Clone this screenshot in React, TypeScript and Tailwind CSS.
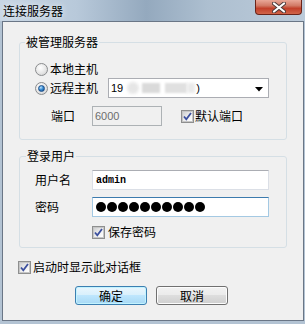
import React from "react";

const cjk = "font-['Noto_Sans_CJK_SC','Noto_Sans',sans-serif] text-[12px] leading-[14px] text-black";

function Radio({ checked }: { checked?: boolean }) {
  return (
    <span className="w-[13px] h-[13px] rounded-full border border-[#8a8c8e] bg-[radial-gradient(circle_at_40%_35%,#ffffff_0%,#e6e6e6_55%,#c9c9c9_100%)] flex items-center justify-center shrink-0">
      {checked && (
        <span className="w-[7px] h-[7px] rounded-full bg-[radial-gradient(circle_at_35%_30%,#bfe3fb_0%,#3b8fd6_45%,#0e3f7e_100%)] border border-[#1c4f8a]" />
      )}
    </span>
  );
}

function Check() {
  return (
    <span className="w-[13px] h-[13px] border border-[#8e8f8f] bg-white flex items-center justify-center shrink-0">
      <span className="w-[11px] h-[11px] border border-[#c6c6c6] bg-[linear-gradient(135deg,#cfd0d1_0%,#f2f2f2_60%,#ffffff_100%)] flex items-center justify-center">
        <svg width="9" height="9" viewBox="0 0 9 9">
          <path d="M1 4.5 L3.3 7.3 L8 1" fill="none" stroke="#3b4f9e" strokeWidth="1.8" />
        </svg>
      </span>
    </span>
  );
}

export default function App() {
  return (
    <div className="w-[305px] h-[324px] bg-[#b3c3d3] flex flex-col overflow-hidden">
      {/* title bar */}
      <div className="h-[21px] shrink-0 flex justify-between bg-[linear-gradient(90deg,#c8d6e4_0%,#b8c9da_25%,#94a9be_48%,#adbfd0_68%,#bccbda_100%)]">
        <span className={`${cjk} pl-[3px] pt-[4px] [text-shadow:0_0_6px_rgba(255,255,255,0.95)]`}>连接服务器</span>
        <div className="w-[47px] h-[15px] mr-[3px] rounded-b-[4px] border border-t-0 border-[#6b2419] bg-[linear-gradient(180deg,#e9a898_0%,#d27a66_40%,#c2402a_60%,#d1654a_100%)] flex items-center justify-center">
          <svg width="14" height="11" viewBox="0 0 14 11">
            <path d="M2 1.5 L12 9.5 M12 1.5 L2 9.5" stroke="#4a3a3a" strokeWidth="4" strokeLinecap="round" />
            <path d="M2 1.5 L12 9.5 M12 1.5 L2 9.5" stroke="#ffffff" strokeWidth="2.2" strokeLinecap="round" />
          </svg>
        </div>
      </div>

      {/* client area */}
      <div className="flex-1 pl-[2px] pr-[1px] pb-[3px] flex">
        <div className="flex-1 border border-[#6a7686] bg-[#f0f0f0] flex flex-col">
          {/* group 1 */}
          <div className="relative mt-[20px] ml-[16px] w-[268px] h-[98px] border border-[#d5dfe5] rounded-[3px] flex flex-col pt-[19px]">
            <span className={`${cjk} absolute -top-[8px] left-[5px] px-[1px] bg-[#f0f0f0]`}>被管理服务器</span>
            <div className="h-[14px] pl-[15px] flex items-center">
              <Radio />
              <span className={`${cjk} ml-[2px]`}>本地主机</span>
            </div>
            <div className="mt-[2px] h-[20px] pl-[15px] flex items-center">
              <Radio checked />
              <span className={`${cjk} ml-[2px] w-[58px]`}>远程主机</span>
              <div className="w-[161px] h-[20px] bg-white border border-[#abadb3] flex items-center pl-[2px] relative">
                <span className="font-['Liberation_Sans',sans-serif] text-[11px] text-black">19</span>
                <span className="ml-[4px] w-[12px] h-[12px] bg-[#e6e6e6] blur-[1.5px] rounded-full" />
                <span className="ml-[3px] w-[18px] h-[10px] bg-[#dadada] blur-[1px]" />
                <span className="ml-[5px] w-[22px] h-[10px] bg-[#e0e0e0] blur-[1px]" />
                <span className="w-[8px] h-[10px] bg-[#eaeaea] blur-[1.5px]" />
                <span className="ml-[1px] font-['Liberation_Sans',sans-serif] text-[11px] text-black">)</span>
                <svg className="absolute right-[5px] top-[8px]" width="8" height="5" viewBox="0 0 8 5">
                  <path d="M0 0 H8 L4 4.5 Z" fill="#000" />
                </svg>
              </div>
            </div>
            <div className="mt-[8px] h-[20px] pl-[31px] flex items-center">
              <span className={`${cjk} w-[41px]`}>端口</span>
              <div className="w-[70px] h-[20px] border border-[#adb2b5] bg-[#f0f0f0] flex items-center pl-[2px]">
                <span className="font-['Liberation_Sans',sans-serif] text-[11px] text-[#6d6d6d]">6000</span>
              </div>
              <div className="ml-[19px] flex items-center">
                <Check />
                <span className={`${cjk} ml-[1px]`}>默认端口</span>
              </div>
            </div>
          </div>

          {/* group 2 */}
          <div className="relative mt-[16px] ml-[16px] w-[268px] h-[92px] border border-[#d5dfe5] rounded-[3px] flex flex-col pt-[13px]">
            <span className={`${cjk} absolute -top-[8px] left-[6px] px-[1px] bg-[#f0f0f0]`}>登录用户</span>
            <div className="h-[20px] pl-[15px] flex items-center">
              <span className={`${cjk} w-[57px]`}>用户名</span>
              <div className="w-[177px] h-[20px] bg-white border border-[#dbdfe6] border-t-[#abadb3] flex items-center pl-[3px]">
                <span className="font-['Liberation_Mono',monospace] text-[10px] font-semibold text-black">admin</span>
              </div>
            </div>
            <div className="mt-[7px] h-[20px] pl-[15px] flex items-center">
              <span className={`${cjk} w-[57px]`}>密码</span>
              <div className="w-[177px] h-[20px] bg-white border border-[#a4c9e3] border-t-[#3d7bad] flex items-center pl-[3px] gap-[1px]">
                {Array.from({ length: 10 }).map((_, i) => (
                  <span key={i} className="w-[10px] h-[10px] rounded-full bg-black" />
                ))}
              </div>
            </div>
            <div className="mt-[8px] h-[14px] pl-[72px] flex items-center">
              <Check />
              <span className={`${cjk} ml-[3px]`}>保存密码</span>
            </div>
          </div>

          {/* startup checkbox */}
          <div className="mt-[12px] ml-[15px] h-[14px] flex items-center">
            <Check />
            <span className={`${cjk} ml-[2px]`}>启动时显示此对话框</span>
          </div>

          {/* buttons */}
          <div className="mt-[12px] ml-[72px] flex gap-[9px]">
            <button className="w-[72px] h-[19px] rounded-[3px] border border-[#3c7fb1] bg-[linear-gradient(180deg,#eaf6fd_0%,#d9f0fc_45%,#bee6fd_50%,#a7d9f5_100%)] shadow-[inset_0_0_0_1px_#c2f3ff] flex items-center justify-center">
              <span className={cjk}>确定</span>
            </button>
            <button className="w-[72px] h-[19px] rounded-[3px] border border-[#707070] bg-[linear-gradient(180deg,#f2f2f2_0%,#ebebeb_45%,#dddddd_50%,#cfcfcf_100%)] shadow-[inset_0_0_0_1px_#fcfcfc] flex items-center justify-center">
              <span className={cjk}>取消</span>
            </button>
          </div>
        </div>
      </div>
    </div>
  );
}
